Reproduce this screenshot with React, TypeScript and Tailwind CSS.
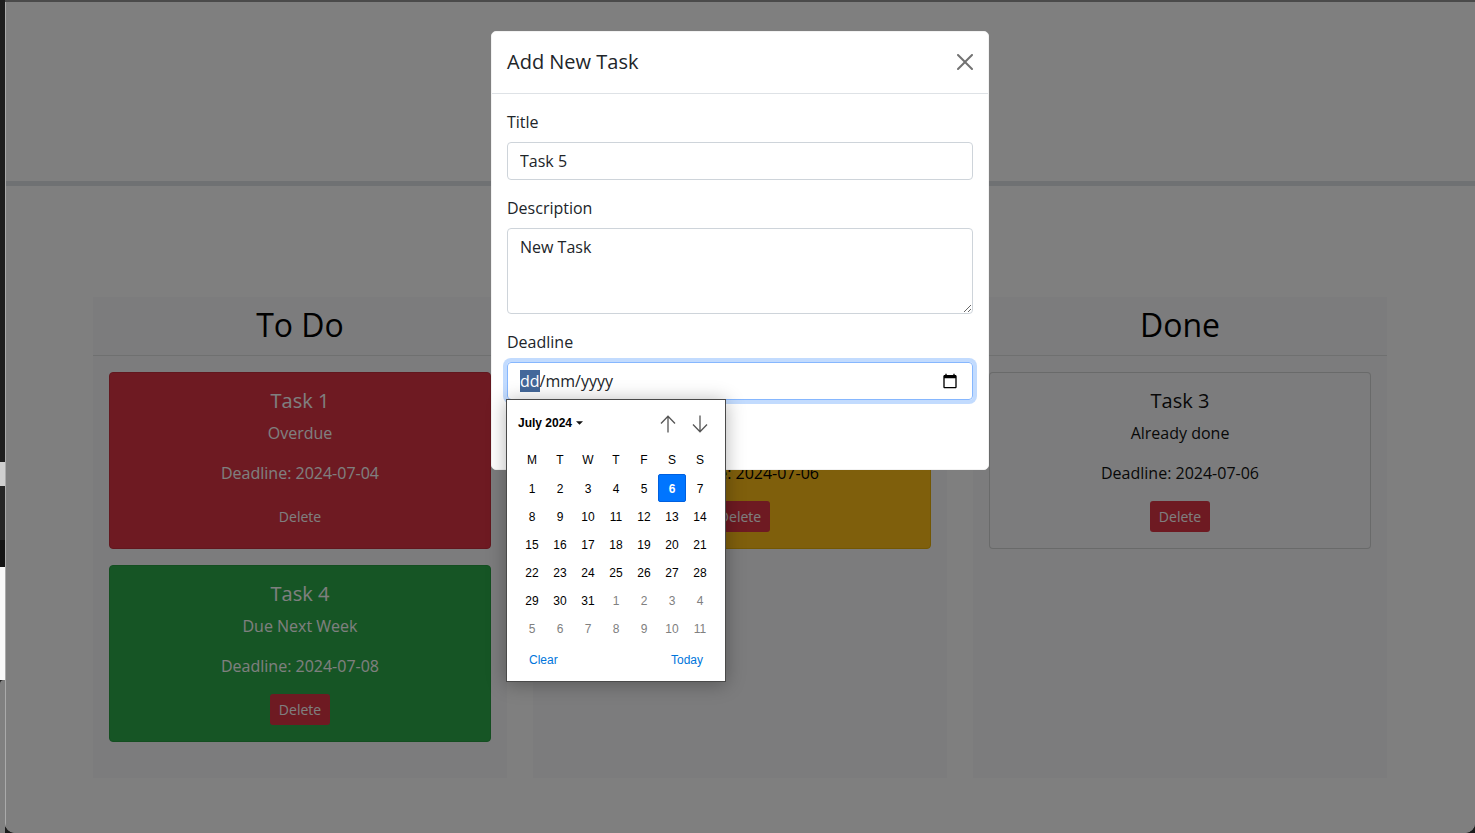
import React from 'react';

interface Task {
  id: number;
  title: string;
  description: string;
  deadline: string;
  color: string;
}

const columns: { name: string; tasks: Task[] }[] = [
  {
    name: 'To Do',
    tasks: [
      { id: 1, title: 'Task 1', description: 'Overdue', deadline: '2024-07-04', color: 'bg-[#dc3545] border-[#c42f3d] text-white' },
      { id: 4, title: 'Task 4', description: 'Due Next Week', deadline: '2024-07-08', color: 'bg-[#2cab4a] border-[#289c43] text-white' },
    ],
  },
  {
    name: 'In Progress',
    tasks: [
      { id: 2, title: 'Task 2', description: 'Due today', deadline: '2024-07-06', color: 'bg-[#ffbf18] border-[#e6ae06] text-black' },
    ],
  },
  {
    name: 'Done',
    tasks: [
      { id: 3, title: 'Task 3', description: 'Already done', deadline: '2024-07-06', color: 'bg-[#f8f9fa] border-black/15 text-[#111]' },
    ],
  },
];

const weekdays = ['M', 'T', 'W', 'T', 'F', 'S', 'S'];
const julyDays = Array.from({ length: 31 }, (_, i) => i + 1);
const augustDays = [1, 2, 3, 4, 5, 6, 7, 8, 9, 10, 11];

function TaskCard({ task }: { task: Task }) {
  return (
    <div className={`rounded-[4px] border p-4 text-center ${task.color}`}>
      <h5 className="mb-2 text-[20px] leading-[24px]">{task.title}</h5>
      <p className="mb-4 text-[16px] leading-[24px]">{task.description}</p>
      <p className="mb-4 text-[16px] leading-[24px]">Deadline: {task.deadline}</p>
      <button className="h-[31px] w-[60px] rounded-[3px] bg-[#dc3545] text-[14px] text-white">Delete</button>
    </div>
  );
}

function DatePopup() {
  return (
    <div className="absolute left-[14px] top-[367px] h-[283px] w-[220px] border border-[#4a4a4a] bg-white font-['Liberation_Sans',sans-serif] text-[12px] text-black shadow-[0_2px_18px_rgba(0,0,0,0.3)]">
      <div className="flex h-[46px] items-center pl-[11px] pr-[17px] pt-[1px]">
        <span className="mb-[2px] font-bold">July 2024</span>
        <svg className="mb-[2px] ml-[4px]" width="7" height="4" viewBox="0 0 8 4">
          <path d="M0 0H8L4 4Z" fill="#111" />
        </svg>
        <div className="ml-auto flex items-center gap-[16px]">
          <svg width="16" height="18" viewBox="0 0 16 18" fill="none" stroke="#555" strokeWidth="1.3">
            <path d="M8 17.5V1M1 8.5L8 1.2L15 8.5" />
          </svg>
          <svg width="16" height="18" viewBox="0 0 16 18" fill="none" stroke="#555" strokeWidth="1.3">
            <path d="M8 0.5V17M1 9.5L8 16.8L15 9.5" />
          </svg>
        </div>
      </div>
      <div className="grid grid-cols-[repeat(7,28px)] auto-rows-[28px] pl-[11px] text-center">
        {weekdays.map((d, i) => (
          <div key={i} className="leading-[28px]">
            {d}
          </div>
        ))}
        {julyDays.map((d) =>
          d === 6 ? (
            <div key={d} className="rounded-[2px] border border-[#0060df] bg-[#0075ff] pt-[2px] font-bold leading-[24px] text-white">
              {d}
            </div>
          ) : (
            <div key={d} className="pt-[2px] leading-[26px]">
              {d}
            </div>
          )
        )}
        {augustDays.map((d) => (
          <div key={d} className="pt-[2px] leading-[26px] text-[#808080]">
            {d}
          </div>
        ))}
      </div>
      <div className="flex h-[36px] items-center justify-between pl-[22px] pr-[22px] text-[#0075db]">
        <span>Clear</span>
        <span>Today</span>
      </div>
    </div>
  );
}

function AddTaskModal() {
  return (
    <div className="relative h-[439px] w-[498px] rounded-[5px] border border-[#f2f2f2] bg-white text-[16px] leading-[24px] text-[#212529]">
      <div className="flex h-[62px] items-center justify-between border-b border-[#dee2e6] pb-[2px] pl-[15px] pr-[15px]">
        <h5 className="text-[20px]">Add New Task</h5>
        <svg width="16" height="16" viewBox="0 0 16 16" fill="#000" opacity="0.55">
          <path d="M.293.293a1 1 0 0 1 1.414 0L8 6.586 14.293.293a1 1 0 1 1 1.414 1.414L9.414 8l6.293 6.293a1 1 0 0 1-1.414 1.414L8 9.414l-6.293 6.293a1 1 0 0 1-1.414-1.414L6.586 8 .293 1.707a1 1 0 0 1 0-1.414z" />
        </svg>
      </div>
      <div className="px-[15px] pt-4">
        <label className="mb-2 block">Title</label>
        <input
          readOnly
          value="Task 5"
          className="mb-4 block h-[38px] w-full rounded-[4px] border border-[#ced4da] px-3 outline-none"
        />
        <label className="mb-2 block">Description</label>
        <textarea
          readOnly
          value="New Task"
          className="mb-4 block h-[86px] w-full rounded-[4px] border border-[#ced4da] px-3 py-[6px] outline-none"
        />
        <label className="mb-2 block">Deadline</label>
        <div className="flex h-[38px] w-full items-center justify-between rounded-[4px] border border-[#86b7fe] pl-3 pr-[14px] shadow-[0_0_0_4px_rgba(13,110,253,0.25)]">
          <span>
            <span className="bg-[#44689a] text-white">dd</span>/mm/yyyy
          </span>
          <svg width="16" height="16" viewBox="0 0 24 24" fill="#000">
            <path d="M20 3h-1V1h-2v2H7V1H5v2H4c-1.1 0-2 .9-2 2v16c0 1.1.9 2 2 2h16c1.1 0 2-.9 2-2V5c0-1.1-.9-2-2-2zm0 18H4V8h16v13z" />
          </svg>
        </div>
      </div>
      <DatePopup />
    </div>
  );
}

export default function App() {
  return (
    <div className="flex h-[833px] w-[1475px] overflow-hidden bg-[#1c1c1c] font-['Open_Sans',sans-serif]">
      {/* bits of the desktop showing behind the window */}
      <div className="flex w-[5px] flex-col">
        <div className="h-[462px] bg-[#1e1e1e]" />
        <div className="h-[24px] bg-[#cfcfcf]" />
        <div className="h-[54px] bg-[#262626]" />
        <div className="h-[27px] bg-[#141414]" />
        <div className="h-[113px] bg-[#fafafa]" />
        <div className="flex-1 rounded-tl-[4px] bg-[#808080]" />
      </div>

      <div className="flex w-[1470px] flex-col">
        <div className="h-[2px] bg-[#4a4a4a]" />
        <div className="relative h-[831px] overflow-hidden rounded-b-[10px] bg-white">
          <div className="box-content h-[179px] border-b-[5px] border-[#dee2e6]" />
          <div className="flex justify-between px-[88px] pt-[111px]">
            {columns.map((col) => (
              <div key={col.name} className="h-[481px] w-[414px] bg-[#f8f9fa]">
                <div className="flex h-[59px] items-center justify-center border-b border-[#dfe0e1] pb-[3px] text-[32px] text-black">
                  {col.name}
                </div>
                <div className="flex flex-col gap-4 p-4">
                  {col.tasks.map((task) => (
                    <TaskCard key={task.id} task={task} />
                  ))}
                </div>
              </div>
            ))}
          </div>

          <div className="absolute inset-0 flex justify-center bg-black/50 pt-[29px] shadow-[inset_1px_0_0_#aaaaaa]">
            <AddTaskModal />
          </div>
        </div>
      </div>
    </div>
  );
}
